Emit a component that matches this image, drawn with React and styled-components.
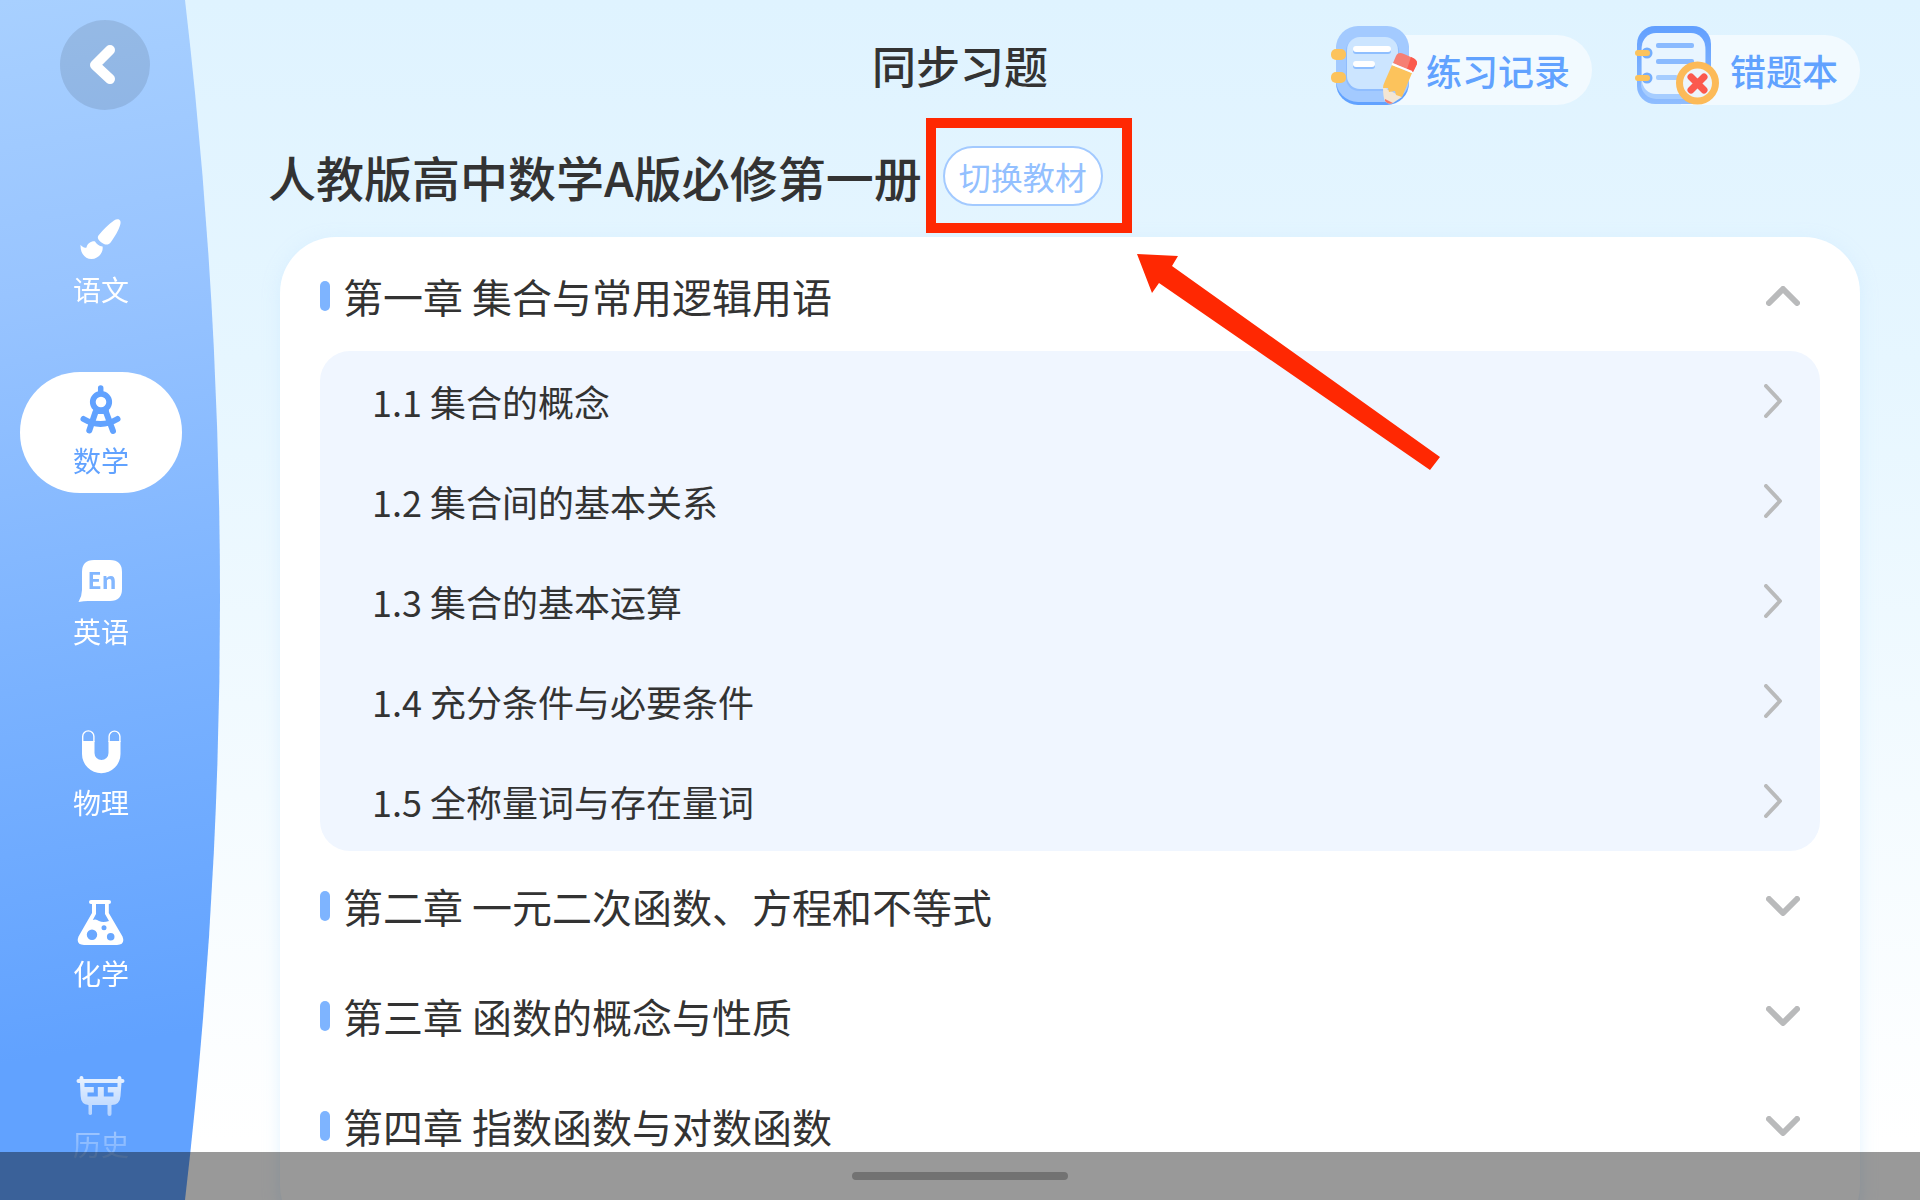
import React, { useState } from "react";
import styled, { createGlobalStyle } from "styled-components";

const GlobalStyle = createGlobalStyle`
  * {
    box-sizing: border-box;
  }
  body {
    margin: 0;
    color: #333;
    font-family: "Noto Sans CJK SC", sans-serif;
  }
  button {
    padding: 0;
    border: 0;
    background: none;
    color: inherit;
    font: inherit;
    cursor: pointer;
  }
  h1, h2, ul {
    margin: 0;
    padding: 0;
    list-style: none;
  }
  h1, h2 {
    font-weight: 500;
  }
  svg {
    display: block;
    flex-shrink: 0;
  }
`;

const BrushIcon = () => (
  <svg width="50" height="50" viewBox="0 0 50 50" fill="currentColor">
    <path d="M38 6.500C41.500 4 45.500 5 44.400 10C43 16 38.500 23 34.800 28.300C32.500 31.600 28.500 31 25.500 28.500C22 25.500 20.500 23.500 23.300 20.500C27.500 15.500 32 10.500 38 6.500Z" />
    <path d="M4.600 30.800C6 33 8.500 34.200 10.500 33.500C11.500 29.500 15 27 19 27.400C20.500 30 23 32 26.600 32.600C27.600 39 22 45 15.500 45C8.500 45 4 38.500 4.600 30.800Z" />
  </svg>
);

const CompassIcon = () => (
  <svg
    width="50"
    height="50"
    viewBox="0 0 50 50"
    fill="none"
    stroke="currentColor"
    strokeWidth="6"
    strokeLinecap="round"
  >
    <path d="M24.700 3V7" strokeWidth="5.500" />
    <circle cx="25" cy="17" r="8.200" strokeWidth="5.800" />
    <path d="M19.500 27L13.300 45.500M30 27L37 46M7.500 34Q24.500 44 41.500 34M20 26H30" />
  </svg>
);

const EnglishIcon = () => (
  <svg width="50" height="50" viewBox="0 0 50 50">
    <path
      fill="currentColor"
      d="M18 4H34Q46 4 46 16V33Q46 45 34 45H12Q8 45 2.500 46Q6 40 6 34V16Q6 4 18 4Z"
    />
    <text
      x="26"
      y="33"
      fill="#83b7ff"
      fontFamily="Noto Sans CJK SC, sans-serif"
      fontSize="23"
      fontWeight="700"
      textAnchor="middle"
    >
      En
    </text>
  </svg>
);

const MagnetIcon = () => (
  <svg width="50" height="50" viewBox="0 0 50 50">
    <path
      fill="currentColor"
      d="M6 14H18.500V26A7 7 0 0 0 32.500 26V14H44.500V27A19.200 19.200 0 0 1 6 27Z"
    />
    <path
      fill="none"
      stroke="currentColor"
      strokeWidth="1.400"
      d="M6.700 15V9.500A5.600 5.600 0 0 1 17.900 9.500V15M33.100 15V9.500A5.400 5.400 0 0 1 43.900 9.500V15"
    />
  </svg>
);

const FlaskIcon = () => (
  <svg width="50" height="50" viewBox="0 0 50 50" fill="currentColor">
    <path
      fillRule="evenodd"
      d="M15 2H33A2 2 0 0 1 33 6H32.800V15L46.500 38.500Q49.500 47 41 47H8Q-.5 47 2.500 38.500L16 15V6H15A2 2 0 0 1 15 2ZM20 6V16L16.800 22Q20 20.500 23 23Q27 25 33 23L29 16V6ZM16 31.500A5.200 5.200 0 1 0 16 41.900A5.200 5.200 0 1 0 16 31.500ZM28 27.200A2.500 2.500 0 1 0 28 32.200A2.500 2.500 0 1 0 28 27.200ZM34.700 35A3.800 3.800 0 1 0 34.700 42.600A3.800 3.800 0 1 0 34.700 35Z"
    />
  </svg>
);

const HistoryIcon = () => (
  <svg width="50" height="50" viewBox="0 0 50 50" fill="currentColor">
    <path d="M3.500 9Q3.500 7 5.500 7T7.500 10H41.500Q41.500 7 43.500 7T45.500 10H46.500A2 2 0 0 1 46.500 14H45.500L44.500 27Q44 36 35.500 36V45A2 2 0 0 1 31.500 45V36H16V45A2 2 0 0 1 12.500 45V36Q5 35.500 4.600 27L4 14H2.500A2 2 0 0 1 2.500 10H3.500Z" />
    <path
      fill="none"
      stroke="#61a2ff"
      strokeWidth="4"
      d="M8.500 16H41.500M19.800 16V25.500H11.500M29.800 16V25.500H37.500"
    />
  </svg>
);

const RecordIcon = () => (
  <svg width="86" height="79" viewBox="0 0 86 79">
    <rect x="5" y="3" width="73" height="76" rx="22" fill="#61a2ff" />
    <rect x="5" y="0" width="73" height="76" rx="22" fill="#a3caff" />
    <rect x="15" y="12" width="53" height="53" rx="13" fill="#8fbdff" />
    <rect x="16" y="11" width="51" height="52" rx="13" fill="#cce5ff" />
    <rect x="22" y="21" width="38" height="7" rx="3" fill="#8fbfff" />
    <rect x="22" y="20" width="38" height="6" rx="3" fill="#fff" />
    <rect x="22" y="36" width="22" height="7" rx="3" fill="#8fbfff" />
    <rect x="22" y="35" width="22" height="6" rx="3" fill="#fff" />
    <rect x="0" y="23" width="15" height="11" rx="5" fill="#fcc35c" />
    <rect x="0" y="46" width="15" height="11" rx="5" fill="#fcc35c" />
    <path d="M52 61L71 71L62 77Q57 79 54 75Q52 71 52 61Z" fill="#f3e6d4" />
    <path d="M54 73L62 77Q57 79 54 75Z" fill="#f47a6c" />
    <path
      d="M61 39L81 47L71 71L65 69L64 65L58 66L57 62L52 62Q52 59 54 55Z"
      fill="#fcc35c"
    />
    <path d="M62 37L82 46L85 40Q88 35 82 32L73 28Q67 25 65 30Z" fill="#f67f73" />
    <path d="M76 43L82 46L85 40Q88 35 82 32L80 31Z" fill="#fb5a4d" />
    <path d="M61 38L81 46" stroke="#fff" strokeWidth="2" />
  </svg>
);

const MistakeIcon = () => (
  <svg width="86" height="79" viewBox="0 0 86 79">
    <defs>
      <linearGradient id="cover" x1="0" y1="0" x2="0" y2="1">
        <stop offset="0" stopColor="#619fff" />
        <stop offset="1" stopColor="#8fbdff" />
      </linearGradient>
    </defs>
    <rect x="2" y="0" width="74" height="78" rx="18" fill="url(#cover)" />
    <rect x="6" y="9" width="65" height="64" rx="15" fill="#a6cdff" />
    <rect x="7" y="7" width="63" height="61" rx="14" fill="#e9f5ff" />
    <rect x="21" y="17" width="38" height="5" rx="2" fill="#8abaff" />
    <rect x="21" y="33" width="38" height="5" rx="2" fill="#8abaff" />
    <rect x="21" y="49" width="22" height="5" rx="2" fill="#a6cdff" />
    <circle cx="12" cy="27" r="5.500" fill="#75aefc" />
    <circle cx="12" cy="52" r="5.500" fill="#75aefc" />
    <rect x="0" y="24" width="15" height="6" rx="3" fill="#fcc35c" />
    <rect x="0" y="49" width="15" height="6" rx="3" fill="#fcc35c" />
    <circle cx="62.500" cy="57" r="18" fill="#edf5fb" stroke="#fcba58" strokeWidth="7" />
    <path
      d="M56 51L69 64M69 51L56 64"
      stroke="#fb594d"
      strokeWidth="7"
      strokeLinecap="round"
    />
  </svg>
);

const BackIcon = () => (
  <svg width="30" height="40" viewBox="0 0 30 40" fill="none">
    <path
      d="M20 5L5 20L20 34"
      stroke="#fff"
      strokeWidth="10"
      strokeLinecap="round"
      strokeLinejoin="round"
    />
  </svg>
);

const ToggleIcon = ({ open }) => (
  <svg width="34" height="20" viewBox="0 0 34 20" fill="none">
    <path
      d={open ? "M3 17L17 3L31 17" : "M3 3L17 17L31 3"}
      stroke="#b9babb"
      strokeWidth="6"
      strokeLinecap="round"
      strokeLinejoin="round"
    />
  </svg>
);

const ArrowIcon = () => (
  <svg width="18" height="34" viewBox="0 0 18 34" fill="none">
    <path
      d="M2 2L16 17L2 32"
      stroke="#b9babb"
      strokeWidth="4"
      strokeLinecap="round"
      strokeLinejoin="round"
    />
  </svg>
);

const subjects = [
  { name: "语文", Icon: BrushIcon },
  { name: "数学", Icon: CompassIcon },
  { name: "英语", Icon: EnglishIcon },
  { name: "物理", Icon: MagnetIcon },
  { name: "化学", Icon: FlaskIcon },
  { name: "历史", Icon: HistoryIcon },
];

const chapters = [
  {
    title: "第一章 集合与常用逻辑用语",
    lessons: [
      "1.1 集合的概念",
      "1.2 集合间的基本关系",
      "1.3 集合的基本运算",
      "1.4 充分条件与必要条件",
      "1.5 全称量词与存在量词",
    ],
  },
  { title: "第二章 一元二次函数、方程和不等式", lessons: [] },
  { title: "第三章 函数的概念与性质", lessons: [] },
  { title: "第四章 指数函数与对数函数", lessons: [] },
];

const App = () => {
  const [subject, setSubject] = useState("数学");
  const [opened, setOpened] = useState(0);

  return (
    <Page>
      <GlobalStyle />
      <Sidebar>
        <SubjectList>
          {subjects.map(({ name, Icon }) => (
            <Subject
              key={name}
              $active={name === subject}
              onClick={() => setSubject(name)}
            >
              <Icon />
              {name}
            </Subject>
          ))}
        </SubjectList>
      </Sidebar>

      <Header>
        <BackButton aria-label="返回">
          <BackIcon />
        </BackButton>
        <Title>同步习题</Title>
        <Actions>
          <Action>
            <RecordIcon />
            <ActionLabel>练习记录</ActionLabel>
          </Action>
          <Action>
            <MistakeIcon />
            <ActionLabel>错题本</ActionLabel>
          </Action>
        </Actions>
      </Header>

      <Main>
        <BookRow>
          <BookName>人教版高中数学A版必修第一册</BookName>
          <SwitchWrap>
            <SwitchButton>切换教材</SwitchButton>
            <Highlight />
            <Pointer width="303" height="217" viewBox="0 0 303 217">
              <path
                d="M0 0L41 2L35 12L303 203L293 216L22 29L15 39Z"
                fill="#ff2802"
              />
            </Pointer>
          </SwitchWrap>
        </BookRow>

        <Card>
          {chapters.map(({ title, lessons }, i) => (
            <section key={title}>
              <Chapter
                aria-expanded={opened === i}
                onClick={() => setOpened(opened === i ? -1 : i)}
              >
                <ChapterTitle>{title}</ChapterTitle>
                <ToggleIcon open={opened === i} />
              </Chapter>
              {opened === i && (
                <Lessons>
                  {lessons.map((lesson) => (
                    <li key={lesson}>
                      <Lesson>
                        {lesson}
                        <ArrowIcon />
                      </Lesson>
                    </li>
                  ))}
                </Lessons>
              )}
            </section>
          ))}
        </Card>
      </Main>

      <SystemBar>
        <HomeHandle />
      </SystemBar>
    </Page>
  );
};

export default App;

const Page = styled.div`
  position: relative;
  display: grid;
  grid-template-columns: 220px 1fr;
  grid-template-rows: auto 1fr;
  height: 100vh;
  overflow: hidden;
  background: linear-gradient(#dff3ff, #e6f6ff 30%, #fff 95%);
`;

const Sidebar = styled.nav`
  grid-area: 1 / 1 / 3 / 2;
  height: 100vh;
  padding: 201px 38px 0 20px;
  background: linear-gradient(170deg, #a8d0ff, #98c4ff 24%, #7ab2ff 56%, #61a2ff 86%);
  clip-path: ellipse(5160px 5160px at -4940px 50%);
`;

const SubjectList = styled.div`
  display: flex;
  flex-direction: column;
  gap: 50px;
  mask-image: linear-gradient(#000 860px, transparent 975px);
`;

const Subject = styled.button`
  display: flex;
  flex-direction: column;
  align-items: center;
  gap: 5px;
  padding: 13px 0;
  border-radius: 60px;
  background: ${({ $active }) => ($active ? "#fff" : "transparent")};
  color: ${({ $active }) => ($active ? "#61a2ff" : "#fff")};
  font-size: 28px;
  line-height: 40px;
`;

const Header = styled.header`
  grid-area: 1 / 1 / 2 / 3;
  z-index: 1;
  display: grid;
  grid-template-columns: 1fr auto 1fr;
  align-items: center;
  padding: 20px 60px 0;
`;

const BackButton = styled.button`
  display: flex;
  align-items: center;
  justify-content: center;
  width: 90px;
  height: 90px;
  border-radius: 50%;
  background: rgba(0, 0, 0, 0.1);
`;

const Title = styled.h1`
  font-size: 44px;
  line-height: 64px;
`;

const Actions = styled.div`
  display: flex;
  justify-content: flex-end;
  gap: 43px;
`;

const Action = styled.button`
  display: flex;
  align-items: flex-end;

  svg {
    z-index: 1;
  }
`;

const ActionLabel = styled.span`
  margin-left: -40px;
  padding: 0 22px 0 49px;
  border-radius: 0 35px 35px 0;
  background: #f2faff;
  color: #61a2ff;
  font-size: 36px;
  font-weight: 500;
  line-height: 70px;
`;

const Main = styled.main`
  grid-area: 2 / 2 / 3 / 3;
  min-height: 0;
  padding: 36px 60px 0;
`;

const BookRow = styled.div`
  display: flex;
  align-items: center;
  gap: 21px;
  margin: 0 0 31px -12px;
`;

const BookName = styled.h2`
  font-size: 48px;
  line-height: 60px;
`;

const SwitchWrap = styled.div`
  position: relative;
  z-index: 1;
`;

const SwitchButton = styled.button`
  display: block;
  padding: 0 14px;
  border: 2px solid #a3caff;
  border-radius: 30px;
  background: #fff;
  color: #93c0ff;
  font-size: 32px;
  line-height: 56px;
`;

/* red frame round the switch button */
const Highlight = styled.div`
  position: absolute;
  inset: -28px -29px -27px -17px;
  border: 10px solid #ff2802;
  pointer-events: none;
`;

const Pointer = styled.svg`
  position: absolute;
  top: 108px;
  left: calc(100% + 34px);
  pointer-events: none;
`;

const Card = styled.div`
  padding: 4px 40px 60px;
  border-radius: 56px;
  background: #fff;
  box-shadow: 0 4px 16px rgba(200, 232, 255, 0.5);
`;

const Chapter = styled.button`
  display: flex;
  align-items: center;
  gap: 13px;
  width: 100%;
  height: 110px;
  padding-right: 20px;

  &::before {
    content: "";
    width: 10px;
    height: 30px;
    border-radius: 5px;
    background: #7eb4ff;
  }
`;

const ChapterTitle = styled.span`
  flex: 1;
  font-size: 40px;
  line-height: 60px;
  text-align: left;
`;

const Lessons = styled.ul`
  border-radius: 30px;
  background: #f0f6ff;
`;

const Lesson = styled.button`
  display: flex;
  align-items: center;
  justify-content: space-between;
  width: 100%;
  height: 100px;
  padding: 0 38px 0 52px;
  font-size: 36px;
`;

const SystemBar = styled.div`
  position: absolute;
  right: 0;
  bottom: 0;
  left: 0;
  z-index: 2;
  display: flex;
  align-items: center;
  justify-content: center;
  height: 48px;
  background: rgba(0, 0, 0, 0.4);
`;

const HomeHandle = styled.div`
  width: 216px;
  height: 8px;
  border-radius: 4px;
  background: #727272;
`;
